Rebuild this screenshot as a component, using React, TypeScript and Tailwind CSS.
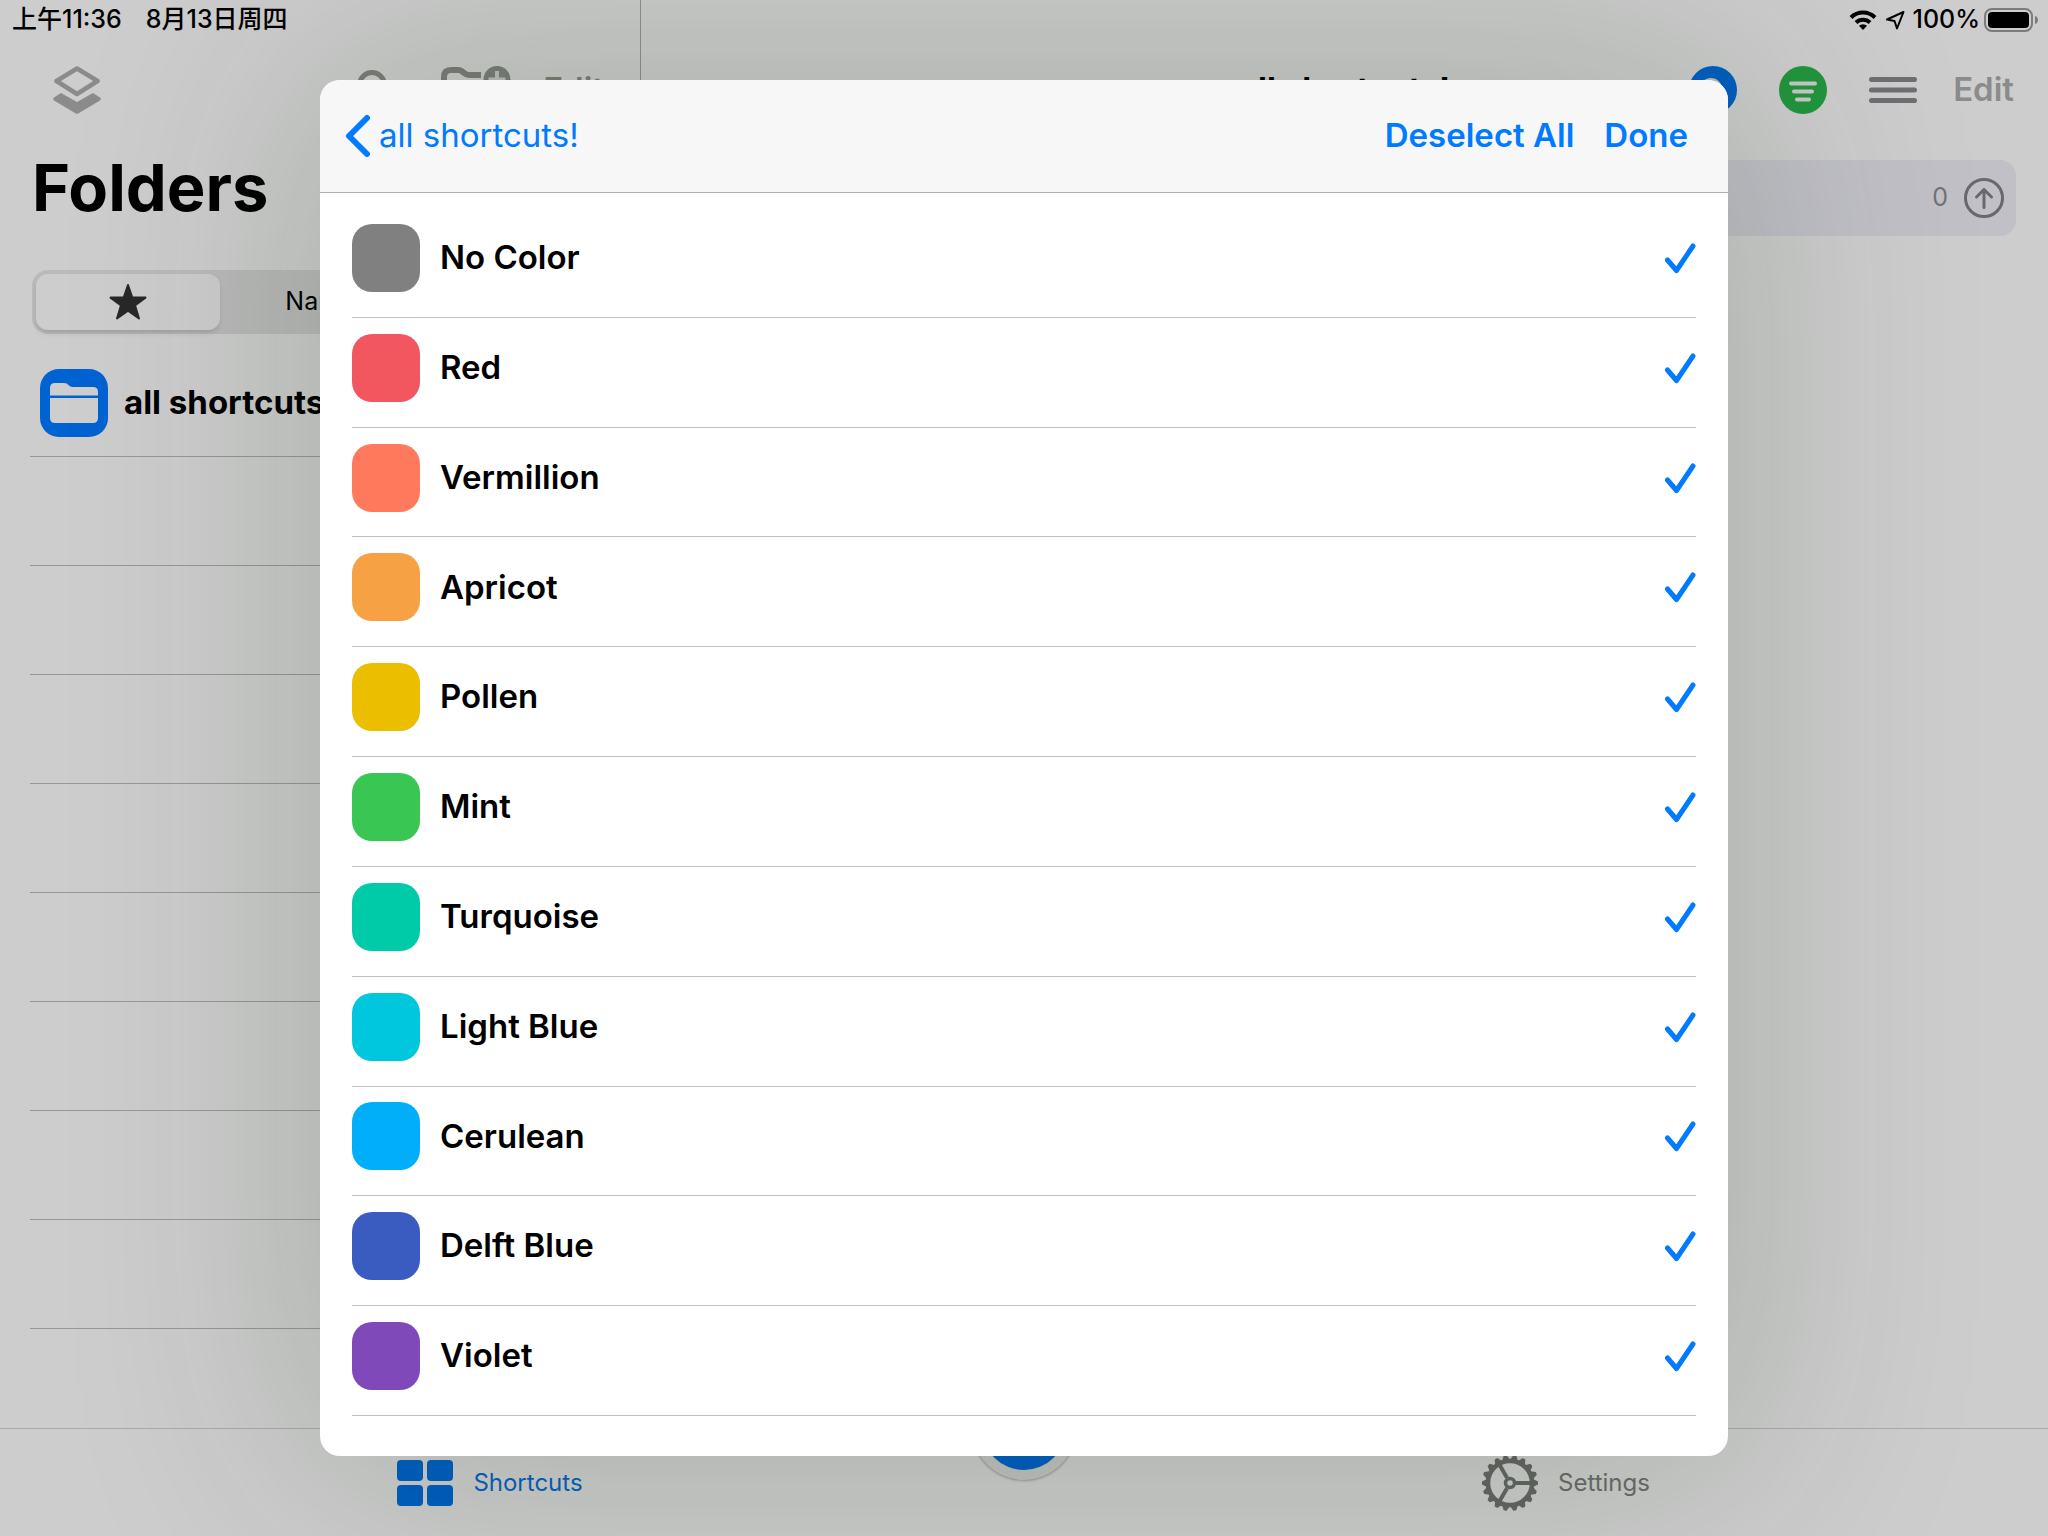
import React from "react";

type Swatch = { name: string; tone: string };

const swatches: Swatch[] = [
  { name: "No Color", tone: "bg-[#808080]" },
  { name: "Red", tone: "bg-[#f2575f]" },
  { name: "Vermillion", tone: "bg-[#ff7a5c]" },
  { name: "Apricot", tone: "bg-[#f6a144]" },
  { name: "Pollen", tone: "bg-[#ebbf00]" },
  { name: "Mint", tone: "bg-[#39c653]" },
  { name: "Turquoise", tone: "bg-[#00cba9]" },
  { name: "Light Blue", tone: "bg-[#00c7de]" },
  { name: "Cerulean", tone: "bg-[#00aef9]" },
  { name: "Delft Blue", tone: "bg-[#3a5cc1]" },
  { name: "Violet", tone: "bg-[#7f49ba]" },
];

function StatusBar() {
  return (
    <div className="absolute inset-x-0 top-0 flex h-10 items-center justify-between pl-3 pr-2 text-[25px] font-medium text-black">
      <div className="flex gap-6">
        <span>上午11:36</span>
        <span>8月13日周四</span>
      </div>
      <div className="flex items-center gap-2">
        <svg className="h-5 w-7" viewBox="0 0 28 20" fill="none" stroke="currentColor" strokeWidth="4">
          <path d="M2 7.5a17 17 0 0 1 24 0" />
          <path d="M7 12.5a10 10 0 0 1 14 0" />
          <path d="M14 20l-4-4.3a6 6 0 0 1 8 0z" fill="currentColor" stroke="none" />
        </svg>
        <svg className="h-5 w-5" viewBox="0 0 20 20" fill="none" stroke="currentColor" strokeWidth="2" strokeLinejoin="round">
          <path d="M18.500 2L2 9.500l7.500 1.500L12 18.500z" />
        </svg>
        <div className="flex items-center gap-1">
          <span>100%</span>
          <svg className="h-6 w-14" viewBox="0 0 56 24">
            <rect x="1" y="1" width="47" height="22" rx="7" fill="none" stroke="#7c7c7c" strokeWidth="2" />
            <rect x="4" y="4" width="41" height="16" rx="4" />
            <path d="M51 8c4 1 4 7 0 8z" fill="#7c7c7c" />
          </svg>
        </div>
      </div>
    </div>
  );
}

function LayersIcon() {
  return (
    <svg className="size-12" viewBox="0 0 48 48" fill="none">
      <path d="M24 2.500L44.500 15 24 28 3.500 15z" stroke="#8b8b8b" strokeWidth="4.500" strokeLinejoin="round" />
      <path d="M8 27l16 9 16-9 7 4.500q1.500 1.500 0 3L26 47q-2 1.300-4 0L1 34.500q-1.500-1.500 0-3z" fill="#8b8b8b" />
    </svg>
  );
}

function Sidebar() {
  return (
    <aside className="flex w-[641px] shrink-0 flex-col border-r border-[#8f918e] pt-10">
      <div className="flex h-[100px] items-center pl-[53px] pr-9 text-[#7b7e79]">
        <button aria-label="Library">
          <LayersIcon />
        </button>
        <button aria-label="Search" className="ml-auto mr-11">
          <svg className="size-10" viewBox="0 0 40 40" fill="none" stroke="currentColor" strokeWidth="5">
            <circle cx="15" cy="15" r="12.500" />
            <path d="M25 25l12 12" strokeLinecap="round" />
          </svg>
        </button>
        <button aria-label="New folder" className="mr-8">
          <svg className="h-12 w-[70px]" viewBox="0 0 70 48" fill="none">
            <path d="M40 9H28q-2.500 0-4.500-1.700l-2.500-2q-1.500-1.300-4-1.300H10q-7 0-7 7v28q0 6 6 6h42q6 0 6-6V32" stroke="currentColor" strokeWidth="6" />
            <circle cx="56" cy="13.500" r="13.500" fill="currentColor" />
            <path d="M56 5v17M47.500 13.500h17" stroke="#bdbfbc" strokeWidth="4" />
          </svg>
        </button>
        <button className="text-[33px] font-semibold">Edit</button>
      </div>
      <h1 className="pl-8 text-[65px] font-bold leading-24 text-black">Folders</h1>
      <div className="mx-8 mt-[34px] grid h-16 grid-cols-3 gap-2 rounded-2xl bg-[#bababa] p-1">
        <button aria-label="Favorites" className="flex items-center justify-center rounded-xl bg-[#cdcdcd] shadow-md">
          <svg className="size-10" viewBox="0 0 40 40" fill="#282828" stroke="#282828" strokeWidth="2" strokeLinejoin="round">
            <path d="M20 3l4.300 12.600H37.500L27 23.400 31 36.500 20 28.600 9 36.500l4-13.100L2.500 15.600h13.200z" />
          </svg>
        </button>
        <button className="text-[25px] text-black">Name</button>
      </div>
      <ul className="mt-[13px] pl-[30px]">
        <li className="flex h-[110px] items-center gap-4 border-b border-[#969896] pl-[10px] pt-0.5">
          <svg className="size-[68px]" viewBox="0 0 68 68">
            <rect width="68" height="68" rx="19" fill="#0063d2" />
            <path d="M10 26.500V19q0-5 5-5h9q3 0 4.500 2t4 2H53q5 0 5 5v3.500z" fill="#cecece" />
            <path d="M10 29h48v20q0 5-5 5H15q-5 0-5-5z" fill="#cecece" />
          </svg>
          <span className="text-[33px] font-bold text-black">all shortcuts!</span>
        </li>
        {Array.from({ length: 8 }, (_, i) => (
          <li key={i} className="h-[109px] border-b border-[#969896]" />
        ))}
      </ul>
    </aside>
  );
}

function Detail() {
  return (
    <section className="flex min-w-0 flex-1 flex-col pt-10">
      <div className="grid h-[100px] grid-cols-3 items-center">
        <h2 className="col-start-2 text-center text-[33px] font-bold text-black">all shortcuts!</h2>
        <div className="flex items-center justify-end gap-[42px] pr-[34px]">
          <button aria-label="Appearance">
            <svg className="size-12" viewBox="0 0 48 48">
              <circle cx="24" cy="24" r="24" fill="#005fc2" />
              <circle cx="22" cy="23" r="11" fill="#bfc1be" />
            </svg>
          </button>
          <button aria-label="Filter">
            <svg className="size-12" viewBox="0 0 48 48">
              <circle cx="24" cy="24" r="24" fill="#22963d" />
              <path d="M12 17.500h24M15 25.500h18M18 33.500h12" stroke="#c8c8c8" strokeWidth="4" strokeLinecap="round" />
            </svg>
          </button>
          <button aria-label="Menu">
            <svg className="size-12" viewBox="0 0 48 48" stroke="#6e6f72" strokeWidth="5" strokeLinecap="round">
              <path d="M2.500 13.500h43M2.500 24h43M2.500 34.500h43" />
            </svg>
          </button>
          <button className="-ml-1.5 text-[33px] font-semibold text-[#8b8b8b]">Edit</button>
        </div>
      </div>
      <div className="mx-8 mt-5 flex h-[76px] items-center justify-end gap-4 rounded-2xl bg-[#c1c0c7] pr-3 text-[25px] text-[#727275]">
        <span>0</span>
        <svg className="size-10" viewBox="0 0 40 40" fill="none" stroke="#68696c" strokeWidth="3" strokeLinecap="round" strokeLinejoin="round">
          <circle cx="20" cy="20" r="18.500" />
          <path d="M20 29.500V12M12.500 19L20 11.500 27.500 19" />
        </svg>
      </div>
    </section>
  );
}

function GearIcon() {
  const teeth = Array.from({ length: 18 }, (_, i) => i * 20 + 10);
  return (
    <svg className="size-14" viewBox="-28 -28 56 56" fill="none" stroke="#646663" strokeWidth="4.500">
      <circle r="22" />
      <circle r="4.500" strokeWidth="3.500" />
      <path d="M6 0H21M-3 5.200L-10.500 18.200M-3-5.200L-10.500-18.200" strokeWidth="4" />
      {teeth.map((angle) => (
        <path key={angle} d="M-4-23L-1.500-28h3L4-23z" transform={`rotate(${angle})`} fill="#646663" stroke="none" />
      ))}
    </svg>
  );
}

function TabBar() {
  return (
    <nav className="relative grid h-[108px] shrink-0 grid-cols-[1fr_120px_1fr] border-t border-[#a9aaa9] text-2xl">
      <a href="#shortcuts" className="flex items-center justify-center gap-5 pl-4 text-[#0860bd]">
        <svg className="h-[46px] w-14" viewBox="0 0 56 46" fill="#005fc2">
          <rect width="26" height="21" rx="4" />
          <rect x="30" width="26" height="21" rx="4" />
          <rect y="25" width="26" height="21" rx="4" />
          <rect x="30" y="25" width="26" height="21" rx="4" />
        </svg>
        Shortcuts
      </a>
      <button aria-label="Add" className="-mt-[53px] size-[104px] justify-self-center rounded-full bg-[#c0c2bf] p-[10px] shadow-[0_0_3px_rgba(0,0,0,0.5)]">
        <span className="block size-full rounded-full bg-[#005fc2]" />
      </button>
      <a href="#settings" className="flex items-center justify-center gap-5 text-[#6a6c69]">
        <GearIcon />
        Settings
      </a>
    </nav>
  );
}

function ColorDialog() {
  return (
    <div
      role="dialog"
      aria-label="Colors"
      className="absolute inset-x-80 inset-y-20 flex flex-col overflow-hidden rounded-[20px] bg-white shadow-[0_0_240px_20px_rgba(10,40,0,0.18)]"
    >
      <header className="flex h-[113px] shrink-0 items-center justify-between border-b border-[#b2b2b2] bg-[#f7f7f7] pl-6 pr-10 text-[33px] text-[#007aff]">
        <button className="flex items-center gap-[7px]">
          <svg className="h-11 w-7" viewBox="0 0 28 44" fill="none" stroke="currentColor" strokeWidth="6" strokeLinecap="round" strokeLinejoin="round">
            <path d="M23 4L5 22l18 18" />
          </svg>
          all shortcuts!
        </button>
        <div className="flex gap-[30px] font-semibold">
          <button>Deselect All</button>
          <button>Done</button>
        </div>
      </header>
      <ul className="flex flex-1 flex-col px-8 pb-10 pt-[15px]">
        {swatches.map(({ name, tone }) => (
          <li key={name} className="flex-1 border-b border-[#c0c0c2]">
            <label className="flex h-full items-center pb-[9px]">
              <span className={`mr-5 size-[68px] rounded-[20px] ${tone}`} />
              <span className="text-[33px] font-semibold text-black">{name}</span>
              <input type="checkbox" defaultChecked className="peer sr-only" />
              <svg
                className="invisible ml-auto size-8 text-[#007aff] peer-checked:visible"
                viewBox="0 0 32 32"
                fill="none"
                stroke="currentColor"
                strokeWidth="5"
                strokeLinecap="round"
                strokeLinejoin="round"
              >
                <path d="M3.500 18l9 10.500L29 4" />
              </svg>
            </label>
          </li>
        ))}
      </ul>
    </div>
  );
}

export default function App() {
  return (
    <div className="relative flex min-h-screen flex-col overflow-hidden bg-[#cdcdcd] font-[Inter,'Noto_Sans_CJK_SC',sans-serif]">
      <div className="flex flex-1">
        <Sidebar />
        <Detail />
      </div>
      <TabBar />
      <ColorDialog />
      <StatusBar />
    </div>
  );
}
